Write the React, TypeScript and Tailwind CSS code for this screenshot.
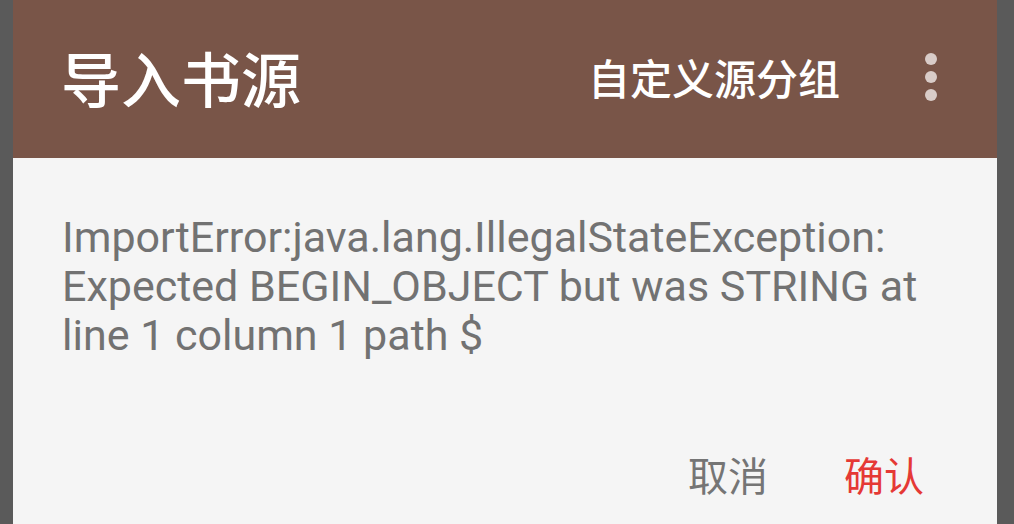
export default function App() {
  const cjk = { fontFamily: '"Noto Sans CJK SC", sans-serif' }
  return (
    <div className="flex h-[524px] w-[1014px] bg-[#5a5a5a] pl-[13px] pr-[17px]">
      <div className="flex flex-1 flex-col bg-[#f5f5f5]">
        <header className="flex h-[158px] items-center bg-[#795548] pl-[48px] pr-[60px] pb-[4px] text-white" style={cjk}>
          <h1 className="text-[60px] font-medium leading-none">导入书源</h1>
          <span className="ml-auto text-[42px] font-medium leading-none">自定义源分组</span>
          <div className="ml-[85px] flex flex-col gap-[6px]">
            <span className="size-[12px] rounded-full bg-[#d9ccc8]" />
            <span className="size-[12px] rounded-full bg-[#d9ccc8]" />
            <span className="size-[12px] rounded-full bg-[#d9ccc8]" />
          </div>
        </header>
        <p
          className="pl-[49px] pr-[30px] pt-[55px] text-[43px] leading-[49px] text-[#727272]"
          style={{ fontFamily: 'Roboto, "Noto Sans CJK SC", sans-serif' }}
        >
          ImportError:java.lang.IllegalStateException:
          <br />
          Expected BEGIN_OBJECT but was STRING at
          <br />
          line 1 column 1 path $
        </p>
        <div className="mt-auto flex items-center justify-end gap-[76px] pb-[30px] pr-[73px] text-[40px] leading-none" style={cjk}>
          <button className="text-[#757575]">取消</button>
          <button className="text-[#e53935]">确认</button>
        </div>
      </div>
    </div>
  )
}
